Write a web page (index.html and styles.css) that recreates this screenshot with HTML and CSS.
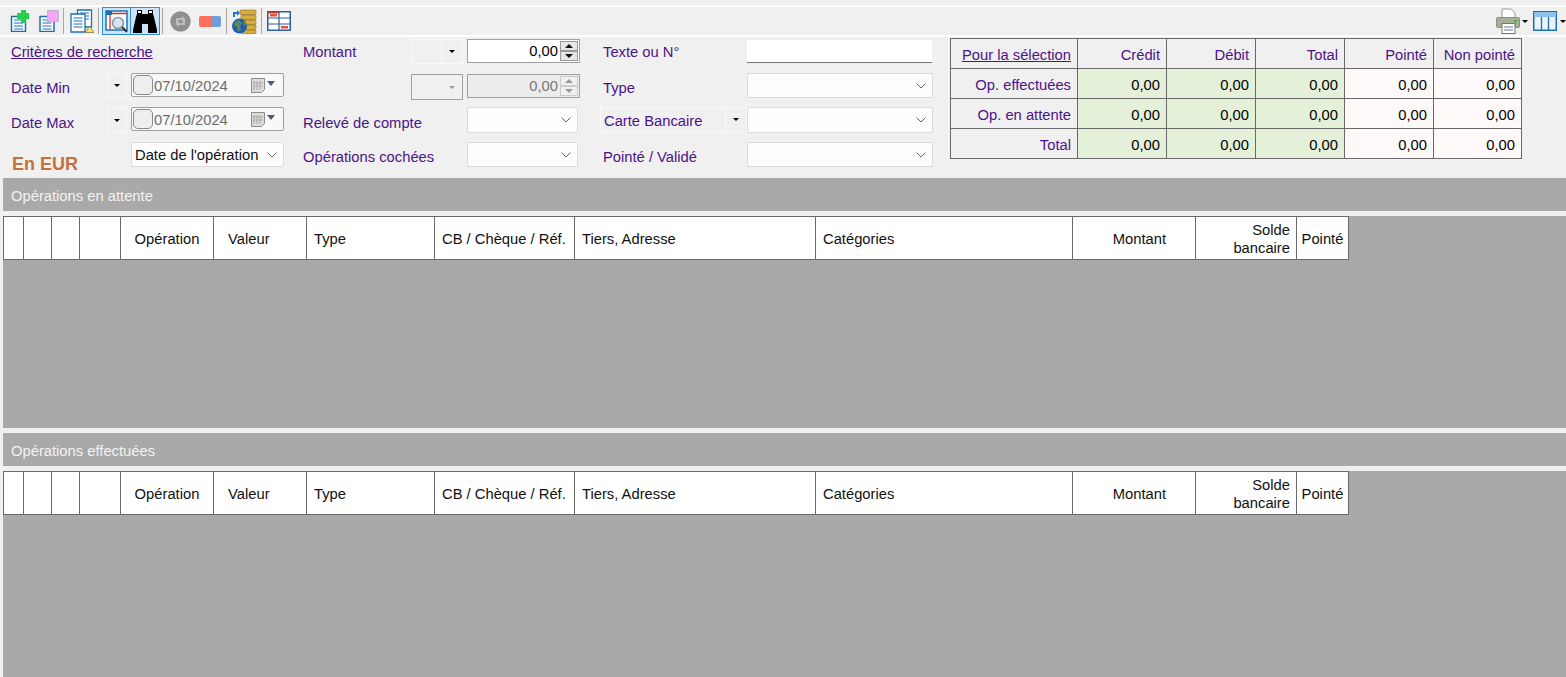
FILE: index.html
```html
<!DOCTYPE html>
<html lang="fr">
<head>
<meta charset="utf-8">
<title>Recherche d'opérations</title>
<link rel="stylesheet" href="styles.css">
</head>
<body>
<div class="toolbar">
  <span class="tool t-first"><svg width="20" height="22" viewBox="0 0 20 22"><path d="M1.500 6.500h14v15h-14z" fill="#fff" stroke="#1f6fb5" stroke-width="1.500"/><path d="M4 10h9M4 13h9M4 16h9M4 19h9" stroke="#1f6fb5"/><path d="M7 3h4V0h5v3h3v6h-3v4h-5V9H7z" fill="#22d04a"/></svg></span>
  <span class="tool t-second"><svg width="20" height="22" viewBox="0 0 20 22"><path d="M1 6.500h14v15H1z" fill="#fff" stroke="#1f6fb5" stroke-width="1.500"/><path d="M3.500 10h9M3.500 13h9M3.500 16h9M3.500 19h9" stroke="#1f6fb5"/><rect x="8.500" y="0.500" width="11" height="11" fill="#f7a6f5" stroke="#b9b9c9"/></svg></span>
  <i class="sep"></i>
  <span class="tool t-third"><svg width="24" height="24" viewBox="0 0 24 24"><path d="M7.500 1h14v17h-14z" fill="#fff" stroke="#1f6fb5" stroke-width="1.300"/><path d="M10 4h9M10 7h9M10 10h9" stroke="#1f6fb5"/><path d="M1 5h14v18H1z" fill="#fff" stroke="#1f6fb5" stroke-width="1.300"/><path d="M3.500 9h9M3.500 12h9M3.500 15h9M3.500 18h9" stroke="#1f6fb5"/><path d="M15.500 23.500l4-6.500 4.500 6.500z" fill="#fbe35c" stroke="#6a6a40" stroke-width=".7"/></svg></span>
  <i class="sep"></i>
  <span class="active a-one"><svg width="24" height="24" viewBox="0 0 24 24"><rect x="1" y="2" width="21" height="19" fill="#fff" stroke="#1f6fb5" stroke-width="1.500"/><rect x="1" y="2" width="6" height="4" fill="#1f6fb5"/><path d="M7 4.500h15M5 6v14" stroke="#d0342c" stroke-width="1.300"/><circle cx="13" cy="14" r="5.500" fill="#d5e6f2" stroke="#8b9aa6" stroke-width="1.600"/><path d="M17 18l5 5" stroke="#333" stroke-width="2.200"/></svg></span>
  <span class="active a-two"><svg width="24" height="24" viewBox="0 0 24 24"><path d="M4 1h5v4h6V1h5v4l1 3 3 13v3h-9v-9h-6v9H0v-3l3-13 1-3z" fill="#000"/><rect x="5" y="2" width="3" height="2" fill="#fff"/><rect x="16" y="2" width="3" height="2" fill="#fff"/></svg></span>
  <i class="sep s-after"></i>
  <span class="tool t-sync"><svg width="21" height="21" viewBox="0 0 21 21"><circle cx="10.500" cy="10.500" r="10.200" fill="#8f8f8f"/><path d="M6 12V7h6V5l3.500 3L12 11V9H8v3zM15 9v5H9v2l-3.500-3L9 10v2h4V9z" fill="#bdbdbd"/></svg></span>
  <span class="tool t-erase"><svg width="22" height="11" viewBox="0 0 22 11"><path d="M2 0h11v11H2q-2 0-2-2V2q0-2 2-2z" fill="#fb6f5b"/><path d="M13 0h7q2 0 2 2v7q0 2-2 2h-7z" fill="#6f9fd8"/></svg></span>
  <i class="sep s-third"></i>
  <span class="tool t-globe"><svg width="25" height="25" viewBox="0 0 25 25"><path d="M1 8V3h4v2H3v3z" fill="#2478c8"/><path d="M5 1l3 3-3 3z" fill="#2478c8"/><g fill="#d6ad3e" stroke="#8b7020" stroke-width=".6"><rect x="8" y="1" width="16" height="4.500" rx="1"/><rect x="9" y="6" width="15" height="4.500" rx="1"/><rect x="9" y="11" width="15" height="4.500" rx="1"/><rect x="9" y="16" width="15" height="4.500" rx="1"/><rect x="9" y="21" width="15" height="3.500" rx="1"/></g><circle cx="7.500" cy="17" r="7.500" fill="#1d5fae"/><path d="M3 13l4-2 3 3-2 3 1 4-3 2-1-5-3-2zM11 12l3 1v3l-2 1z" fill="#5e8a55"/></svg></span>
  <i class="sep"></i>
  <span class="tool t-table"><svg width="24" height="20" viewBox="0 0 24 20"><rect x=".75" y=".75" width="22.500" height="18.500" fill="#fff" stroke="#2f5d9e" stroke-width="1.500"/><path d="M0 7h24M0 13h24M12 0v20" stroke="#2f5d9e" stroke-width="1.200"/><rect x="3" y="3" width="7" height="2.500" fill="#e2563c"/><rect x="14" y="15" width="7" height="2.500" fill="#e2563c"/><rect x="1" y="1" width="11" height="1.500" fill="#b8402e"/></svg></span>
  <span class="tool-right">
    <svg width="24" height="26" viewBox="0 0 24 26"><path d="M6 1h9l4 4v6H6z" fill="#fff" stroke="#9a9a9a"/><rect x=".5" y="9.500" width="23" height="10" rx="1" fill="#a6b094" stroke="#8a8f80"/><rect x="18" y="12" width="3" height="2" fill="#3bb143"/><rect x="6" y="15.500" width="13" height="10" fill="#fff" stroke="#6f7a88"/><path d="M8 19h9M8 22h9" stroke="#6f7a88"/></svg>
    <i class="arrow arrow-print"></i>
    <svg class="col-icon" width="24" height="20" viewBox="0 0 24 20"><rect x=".75" y=".75" width="22.500" height="18.500" fill="#eaf3fb" stroke="#1f6fb5" stroke-width="1.500"/><rect x="1" y="1" width="22" height="5" fill="#8dc0ea"/><path d="M8.500 6v13M15.500 6v13" stroke="#1f6fb5" stroke-width="1.300"/></svg>
    <i class="arrow"></i>
  </span>
</div>

<div class="filters">
  <div class="form">
    <a class="lbl link r1 c1">Critères de recherche</a>
    <span class="lbl low r2 c1">Date Min</span>
    <span class="mini r2 c2"><i class="arrow"></i></span>
    <span class="date r2 c3"><i class="check"></i><span class="date-text">07/10/2024</span><svg class="cal" width="14" height="15" viewBox="0 0 14 15"><path d="M.5.500h13v11l-3 3H.5z" fill="#dcdcdc" stroke="#8c8c8c"/><path d="M3 3v9M6 3v9M9 3v9M2 5h10M2 8h10" stroke="#aaa"/></svg><i class="cal-arrow"></i></span>
    <span class="lbl low r3 c1">Date Max</span>
    <span class="mini r3 c2"><i class="arrow"></i></span>
    <span class="date r3 c3"><i class="check"></i><span class="date-text">07/10/2024</span><svg class="cal" width="14" height="15" viewBox="0 0 14 15"><path d="M.5.500h13v11l-3 3H.5z" fill="#dcdcdc" stroke="#8c8c8c"/><path d="M3 3v9M6 3v9M9 3v9M2 5h10M2 8h10" stroke="#aaa"/></svg><i class="cal-arrow"></i></span>
    <span class="eur r4 c1">En EUR</span>
    <span class="select r4 c3"><span class="select-text">Date de l'opération</span><svg class="chev" width="10" height="6" viewBox="0 0 10 6"><path d="M.5.500L5 5 9.500.500" fill="none" stroke="#666"/></svg></span>

    <span class="lbl r1 c4">Montant</span>
    <span class="split r1 c5"><i class="split-l"></i><i class="split-r"><i class="arrow"></i></i></span>
    <span class="num r1 c6"><span class="num-val">0,00</span><span class="spin"><i class="spin-b"><i class="up"></i></i><i class="spin-b"><i class="down"></i></i></span></span>
    <span class="split off r2 c5"><i class="split-l"></i><i class="split-r"><i class="arrow"></i></i></span>
    <span class="num off r2 c6"><span class="num-val">0,00</span><span class="spin"><i class="spin-b"><i class="up"></i></i><i class="spin-b"><i class="down"></i></i></span></span>
    <span class="lbl low r3 c4">Relevé de compte</span>
    <span class="select short r3 c6"><svg class="chev" width="10" height="6" viewBox="0 0 10 6"><path d="M.5.500L5 5 9.500.500" fill="none" stroke="#666"/></svg></span>
    <span class="lbl low r4 c4">Opérations cochées</span>
    <span class="select short r4 c6"><svg class="chev" width="10" height="6" viewBox="0 0 10 6"><path d="M.5.500L5 5 9.500.500" fill="none" stroke="#666"/></svg></span>

    <span class="lbl r1 c7">Texte ou N°</span>
    <span class="text-input r1 c8"></span>
    <span class="lbl low r2 c7">Type</span>
    <span class="select r2 c8"><svg class="chev" width="10" height="6" viewBox="0 0 10 6"><path d="M.5.500L5 5 9.500.500" fill="none" stroke="#666"/></svg></span>
    <span class="split card r3 c7"><i class="split-l">Carte Bancaire</i><i class="split-r"><i class="arrow"></i></i></span>
    <span class="select r3 c8"><svg class="chev" width="10" height="6" viewBox="0 0 10 6"><path d="M.5.500L5 5 9.500.500" fill="none" stroke="#666"/></svg></span>
    <span class="lbl low r4 c7">Pointé / Validé</span>
    <span class="select r4 c8"><svg class="chev" width="10" height="6" viewBox="0 0 10 6"><path d="M.5.500L5 5 9.500.500" fill="none" stroke="#666"/></svg></span>
  </div>

  <table class="summary">
    <colgroup><col class="s0"><col class="s1"><col class="s1"><col class="s1"><col class="s1"><col class="s2"></colgroup>
    <tr><th><a class="link">Pour la sélection</a></th><th>Crédit</th><th>Débit</th><th>Total</th><th>Pointé</th><th>Non pointé</th></tr>
    <tr><th>Op. effectuées</th><td class="g">0,00</td><td class="g">0,00</td><td class="g">0,00</td><td class="p">0,00</td><td class="p">0,00</td></tr>
    <tr><th>Op. en attente</th><td class="g">0,00</td><td class="g">0,00</td><td class="g">0,00</td><td class="p">0,00</td><td class="p">0,00</td></tr>
    <tr><th>Total</th><td class="g">0,00</td><td class="g">0,00</td><td class="g">0,00</td><td class="p">0,00</td><td class="p">0,00</td></tr>
  </table>
</div>

<section class="panel">
  <h2 class="band">Opérations en attente</h2>
  <div class="grid-area first">
    <table class="ops">
      <colgroup><col class="k1"><col class="k2"><col class="k2"><col class="k3"><col class="k4"><col class="k4"><col class="k5"><col class="k6"><col class="k7"><col class="k8"><col class="k9"><col class="k10"><col class="k11"></colgroup>
      <tr><th></th><th></th><th></th><th></th><th class="ctr">Opération</th><th class="val">Valeur</th><th>Type</th><th>CB / Chèque / Réf.</th><th>Tiers, Adresse</th><th>Catégories</th><th class="right pr">Montant</th><th class="right">Solde<br>bancaire</th><th class="ctr">Pointé</th></tr>
    </table>
  </div>
</section>
<section class="panel">
  <h2 class="band">Opérations effectuées</h2>
  <div class="grid-area">
    <table class="ops">
      <colgroup><col class="k1"><col class="k2"><col class="k2"><col class="k3"><col class="k4"><col class="k4"><col class="k5"><col class="k6"><col class="k7"><col class="k8"><col class="k9"><col class="k10"><col class="k11"></colgroup>
      <tr><th></th><th></th><th></th><th></th><th class="ctr">Opération</th><th class="val">Valeur</th><th>Type</th><th>CB / Chèque / Réf.</th><th>Tiers, Adresse</th><th>Catégories</th><th class="right pr">Montant</th><th class="right">Solde<br>bancaire</th><th class="ctr">Pointé</th></tr>
    </table>
  </div>
</section>
</body>
</html>
```

FILE: styles.css
```css
html, body { margin: 0; padding: 0; height: 677px; overflow: hidden; }
body { background: #f0f0f0; font-family: "Liberation Sans", Arial, sans-serif; font-size: 14.75px; color: #000; }
i { display: block; font-style: normal; }

.toolbar { margin-top: 5px; height: 28px; border-top: 2px solid #fff; border-bottom: 2px solid #fff; padding-left: 10px; display: flex; align-items: center; position: relative; }
.tool { display: flex; align-items: center; }
.t-first { margin-right: 9px; margin-top: -1px; }
.t-second { margin-right: 4px; margin-top: -1px; }
.t-third { margin: 0 4px 0 6px; }
.sep { width: 1px; height: 26px; background: #a8a8a8; }
.active { width: 27px; height: 26px; background: #cce4f7; border: 1px solid #2f8fd8; display: flex; align-items: center; justify-content: center; box-sizing: content-box; }
.a-one { margin-left: 3px; }
.a-two { margin-left: -1px; width: 28px; }
.s-after { margin-left: 2px; }
.t-sync { margin-left: 7px; }
.t-erase { margin-left: 8px; margin-right: 5px; }
.t-globe { margin: 0 4px 0 5px; }
.t-table { margin-left: 5px; }
.tool-right { margin-left: auto; display: flex; align-items: center; }
.arrow { width: 0; height: 0; border-left: 3px solid transparent; border-right: 3px solid transparent; border-top: 3px solid #000; }
.arrow-print { margin: 0 5px 0 2px; }
.col-icon { margin-right: 3px; }

.filters { display: flex; height: 141px; align-items: flex-start; }
.form { display: grid; margin: 2px 0 0 11px; grid-template-columns: 96px 20px 4px 153px 19px 108px 52px 4px 113px 23px 144px 186px; grid-template-rows: 25px 25px 26px 25px; row-gap: 9px; width: 922px; }
.r1 { grid-row: 1; } .r2 { grid-row: 2; } .r3 { grid-row: 3; } .r4 { grid-row: 4; }
.c1 { grid-column: 1 / span 2; } .c2 { grid-column: 2; } .c3 { grid-column: 4; } .c4 { grid-column: 6; } .c5 { grid-column: 7; } .c6 { grid-column: 9; } .c7 { grid-column: 11; } .c8 { grid-column: 12; }
.c1.lbl.r1 { grid-column: 1 / span 5; }
.r2.c1, .r3.c1 { grid-column: 1; }

.lbl { color: #4b1488; align-self: center; white-space: nowrap; }
.low { position: relative; top: 2px; }
.r3.low { top: 3px; }
.link { color: #4b1488; text-decoration: underline; }
.eur { color: #c8703a; font-weight: bold; font-size: 18px; align-self: end; grid-column: 1 / span 2; margin: 0 0 0 1px; position: relative; top: 8px; }
.mini { border: 1px solid #fafafa; display: flex; align-items: center; justify-content: center; box-sizing: border-box; }
.date { display: flex; align-items: center; height: 24px; box-sizing: border-box; border: 1px solid #a0a0a0; border-radius: 2px; background: #f8f8f8; padding-left: 1px; color: #6d6d6d; }
.check { width: 20px; height: 20px; box-sizing: border-box; border: 1px solid #888; border-radius: 5px; background: #eee; flex: none; }
.date-text { margin-left: 1px; flex: 1; padding-top: 2px; }
.cal { margin-right: 1px; }
.cal-arrow { width: 0; height: 0; border-left: 4px solid transparent; border-right: 4px solid transparent; border-top: 5px solid #4c5c74; margin: -3px 8px 0 1px; }
.select { display: flex; align-items: center; background: #fdfdfd; border: 1px solid #dcdcdc; border-radius: 2px; box-sizing: border-box; padding: 0 3px; color: #111; }
.select.short { margin-right: 2px; }
.select-text { flex: 1; white-space: nowrap; }
.chev { margin-left: auto; margin-right: 3px; flex: none; }
.split { display: flex; box-sizing: border-box; border: 1px solid #fafafa; }
.split-l { flex: 1; border-right: 1px solid #fafafa; }
.split-r { width: 20px; display: flex; align-items: center; justify-content: center; }
.split.off { border-color: #a0a0a0; margin-top: 1px; height: 26px; }
.split.off .split-l { border-color: transparent; }
.split.off .arrow { border-top-color: #999; }
.num { display: flex; align-items: center; background: #fff; border: 1px solid #a0a0a0; box-sizing: border-box; height: 24px; }
.num.off { background: #ececec; color: #777; margin-top: 1px; }
.num-val { flex: 1; text-align: right; padding-right: 2px; }
.spin { display: flex; flex-direction: column; width: 18px; margin-right: 1px; gap: 0; }
.spin-b { height: 10px; background: #e6e6e6; border: 1px solid #999; box-sizing: border-box; display: flex; align-items: center; justify-content: center; }
.off .spin-b { border-color: #ccc; background: #f0f0f0; }
.up { width: 0; height: 0; border-left: 4px solid transparent; border-right: 4px solid transparent; border-bottom: 4px solid #111; }
.down { width: 0; height: 0; border-left: 4px solid transparent; border-right: 4px solid transparent; border-top: 4px solid #111; }
.off .up { border-bottom-color: #999; }
.off .down { border-top-color: #999; }
.text-input { background: #fff; border-bottom: 1px solid #777; height: 23px; margin-top: 1px; margin-right: 1px; box-sizing: border-box; }
.card { margin-left: -3px; color: #4b1488; height: 25px; }
.card .split-l { padding-left: 3px; line-height: 26px; white-space: nowrap; }

.summary { border-collapse: collapse; table-layout: fixed; width: 571px; margin: 1px 0 0 17px; }
.summary th, .summary td { border: 1px solid #696969; height: 30px; padding: 2px 6px 0 4px; text-align: right; font-weight: normal; box-sizing: border-box; white-space: nowrap; }
.summary th { color: #4b1488; }
.s0 { width: 127px; } .s1 { width: 89px; } .s2 { width: 88px; }
.g { background: #e4f0d8; }
.p { background: #fff9f9; }

.panel { margin-left: 3px; }
.band { margin: 0; height: 33px; line-height: 37px; background: #a9a9a9; color: #f2f2f2; font-size: 14.75px; font-weight: normal; padding-left: 8px; }
.grid-area { margin-top: 5px; background: #a9a9a9; height: 206px; }
.grid-area.first { height: 212px; margin-bottom: 5px; }
.ops { border-collapse: collapse; table-layout: fixed; width: 1345px; background: #fff; }
.ops th { border: 1px solid #696969; height: 43px; box-sizing: border-box; padding: 2px 7px 0; font-weight: normal; text-align: left; color: #111; line-height: 18px; white-space: nowrap; overflow: hidden; }
.ops th.ctr { text-align: center; padding: 2px 0 0; }
.ops th.val { padding-left: 14px; }
.ops th.right { text-align: right; padding: 2px 6px 0; }
.ops th.pr { padding-right: 29px; }
.k1 { width: 20px; } .k2 { width: 28px; } .k3 { width: 41px; } .k4 { width: 93px; } .k5 { width: 128px; } .k6 { width: 140px; } .k7 { width: 241px; } .k8 { width: 257px; } .k9 { width: 123px; } .k10 { width: 101px; } .k11 { width: 52px; }
```
